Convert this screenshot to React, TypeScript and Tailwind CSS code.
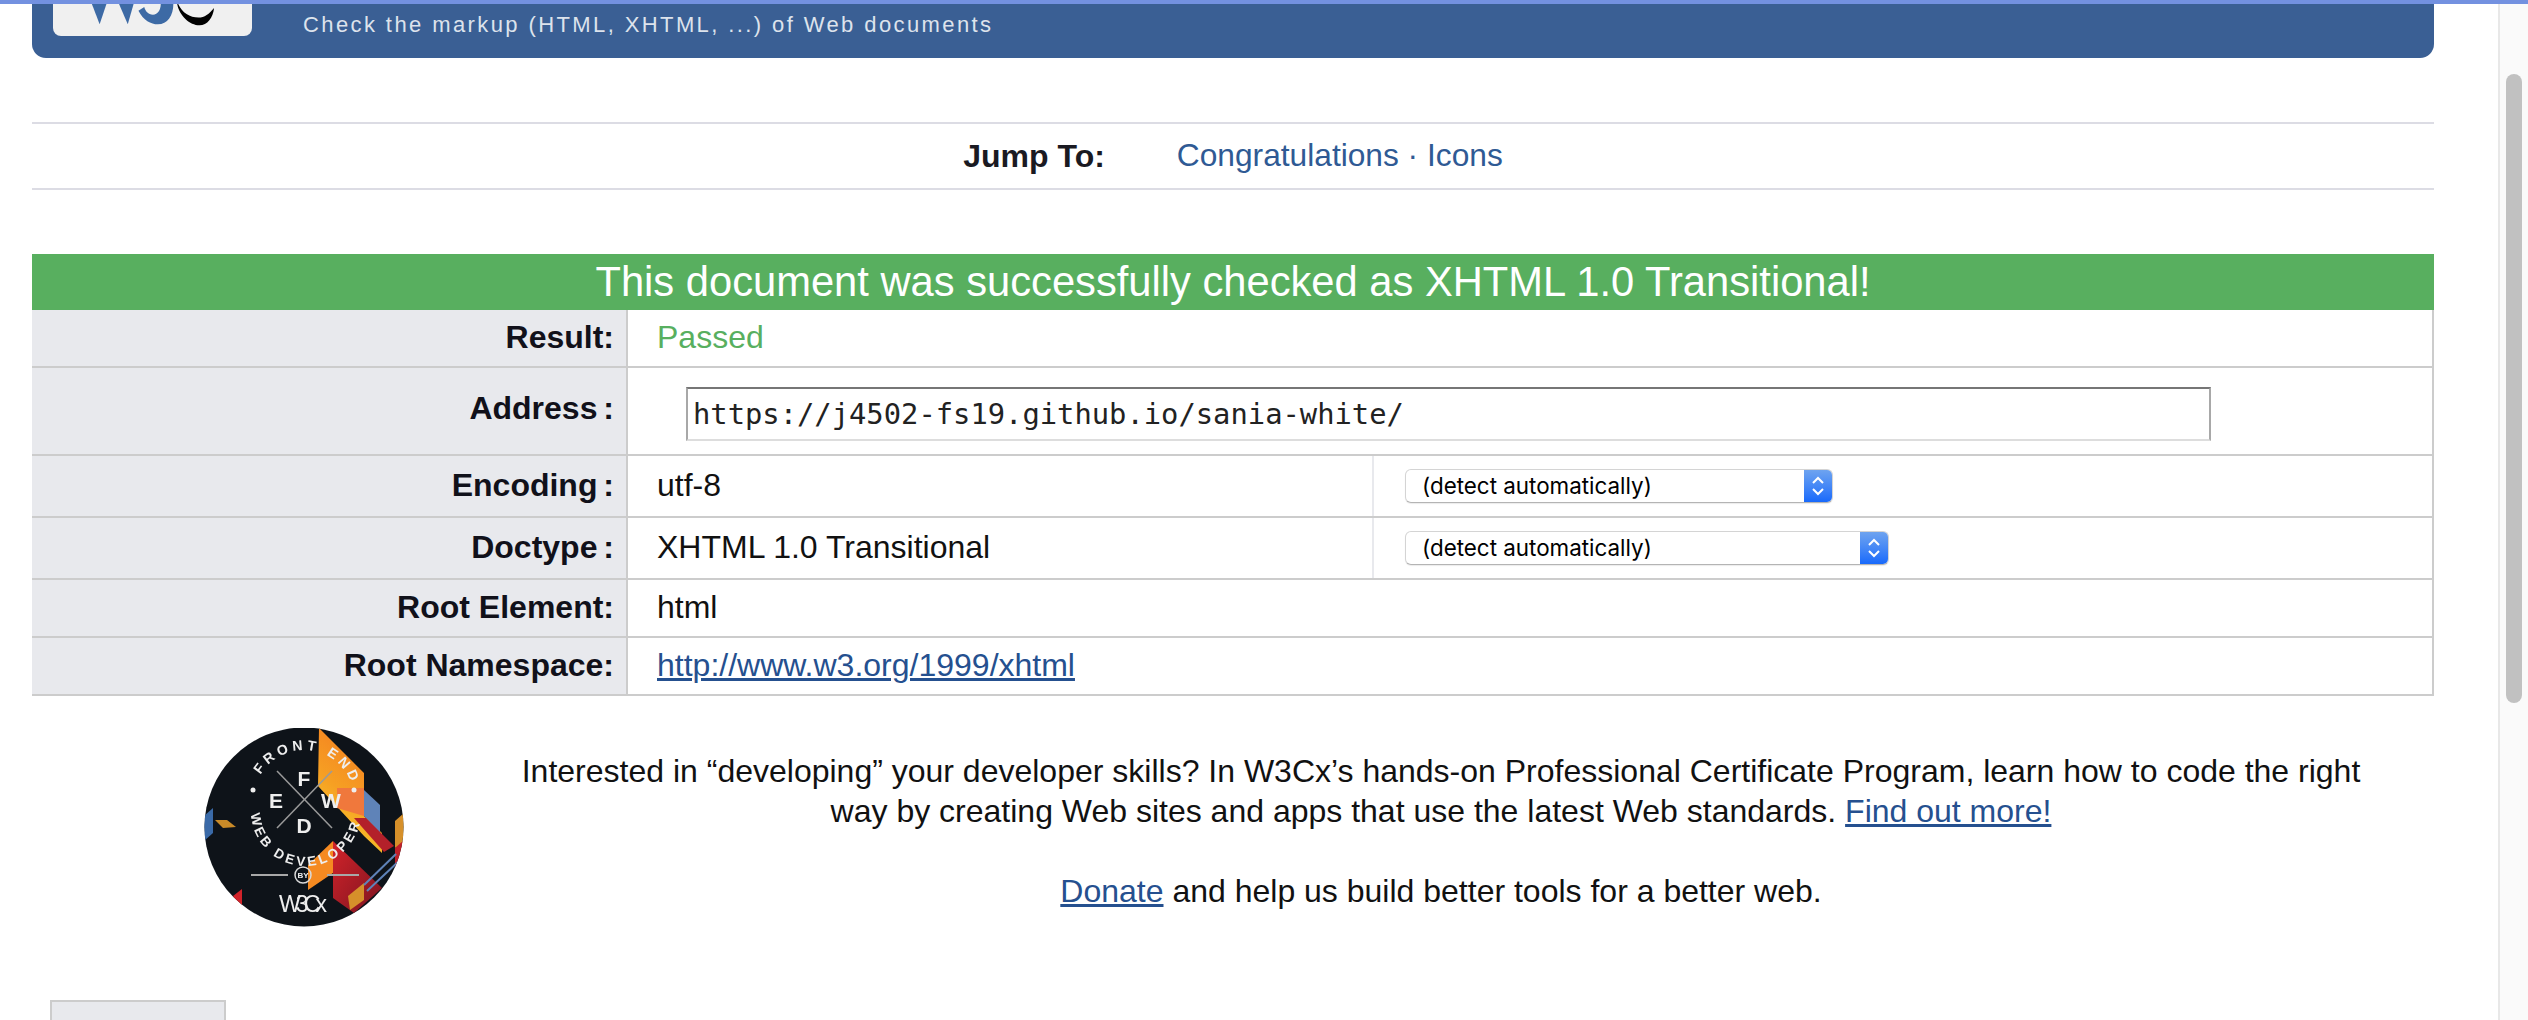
import React from "react";

const sans = "font-['Liberation_Sans',Arial,sans-serif]";

function W3CLogo() {
  return (
    <svg viewBox="0 0 199 33" className="w-full h-full block">
      <polygon points="37,0 52,0 45,21" fill="#3d6aa5" />
      <polygon points="65,0 80,0 74,21" fill="#3d6aa5" />
      <path d="M85,7 C90,17 98,21 105,21 C115,21 121,12 121,0 L108,0 C108,6 105,11 100,11 C95,11 92,7 91,3 Z" fill="#3d6aa5" />
      <path d="M125,0 C127,12 138,22 148,22 C156,22 162,14 163,4 C158,10 153,14 147,14 C138,14 130,9 126,0 Z" fill="#000" />
    </svg>
  );
}

function Badge() {
  return (
    <svg viewBox="0 0 200 200" className="w-[200px] h-[200px] shrink-0 blur-[0.6px]">
      <defs>
        <clipPath id="c"><circle cx="100" cy="99" r="99.5" /></clipPath>
        <linearGradient id="o" x1="0.7" y1="0" x2="0.3" y2="1">
          <stop offset="0" stopColor="#f47a20" />
          <stop offset="0.55" stopColor="#f6a023" />
          <stop offset="1" stopColor="#f7d02c" />
        </linearGradient>
        <linearGradient id="r" x1="0" y1="0" x2="1" y2="1">
          <stop offset="0" stopColor="#d2232a" />
          <stop offset="1" stopColor="#7c1420" />
        </linearGradient>
        <path id="up" d="M56.7,47 A50,50 0 0 1 150,72" />
        <path id="low" d="M47,86 A55,55 0 0 0 157,80" />
      </defs>
      <g clipPath="url(#c)">
        <rect width="200" height="200" fill="#0e1319" />
        <polygon points="115,0 160,45 160,88 178,105 178,125 160,108 114,58" fill="url(#o)" />
        <polygon points="160,62 176,77 176,105 160,88" fill="#5f83b8" />
        <polygon points="133,60 160,60 160,88 133,80" fill="#f0783c" />
        <polygon points="150,90 162,90 190,118 180,124" fill="#b3202a" />
        <polygon points="129,113 178,160 150,185 129,170" fill="url(#r)" />
        <polygon points="104,137 129,113 129,145 104,162" fill="#f58a21" />
        <polygon points="0,88 9,80 9,105 0,113" fill="#3a6aa8" />
        <polygon points="11,92 23,92 32,99 19,100" fill="#c98a28" />
        <polygon points="29,168 38,161 38,182" fill="#d2232a" />
        <polygon points="144,168 160,155 160,172 146,182" fill="#d6902a" />
        <polygon points="191,93 200,85 200,115 191,120" fill="#d6902a" />
        <polygon points="191,120 200,112 200,135 191,140" fill="#c1202a" />
        <line x1="160" y1="157" x2="192" y2="126" stroke="#5f83b8" strokeWidth="2" />
        <line x1="163" y1="163" x2="195" y2="133" stroke="#5f83b8" strokeWidth="2" />
        <line x1="73" y1="43" x2="128" y2="100" stroke="#9a9a9a" strokeWidth="1.5" />
        <line x1="128" y1="43" x2="73" y2="100" stroke="#9a9a9a" strokeWidth="1.5" />
        <line x1="47" y1="147" x2="84" y2="147" stroke="#a8a8a8" strokeWidth="2" />
        <line x1="123" y1="147" x2="155" y2="147" stroke="#a8a8a8" strokeWidth="2" />
        <circle cx="99" cy="147" r="8" fill="none" stroke="#d8d8d8" strokeWidth="1.5" />
        <g fill="#eeeeee" fontFamily="'Liberation Sans', Arial, sans-serif" textAnchor="middle">
          <text x="99" y="150" fontSize="8" fontWeight="700">BY</text>
          <text x="100" y="58" fontSize="21" fontWeight="700">F</text>
          <text x="72" y="80" fontSize="21" fontWeight="700">E</text>
          <text x="127" y="80" fontSize="21" fontWeight="700">W</text>
          <text x="100" y="105" fontSize="21" fontWeight="700">D</text>
          <text x="99" y="184" fontSize="23" fontWeight="400" textLength="48">W3Cx</text>
          <text fontSize="14" fontWeight="700" letterSpacing="3.8" textAnchor="start">
            <textPath href="#up" startOffset="0">FRONT END</textPath>
          </text>
          <text fontSize="13.5" fontWeight="700" letterSpacing="3.2" textAnchor="start">
            <textPath href="#low" startOffset="0">WEB DEVELOPER</textPath>
          </text>
          <circle cx="49" cy="62" r="2.5" />
          <circle cx="150" cy="62" r="2.5" />
        </g>
      </g>
    </svg>
  );
}

function FakeSelect({ width }: { width: string }) {
  return (
    <div className={`${width} h-[34px] flex rounded-[6px] border border-[#d4d4d4] border-b-[#b4b4b4] bg-white shadow-[0_1px_1px_rgba(0,0,0,0.08)] overflow-hidden`}>
      <span className="flex-1 pl-[16px] font-['Inter',sans-serif] text-[22.4px] leading-[32px] text-black whitespace-nowrap">
        (detect automatically)
      </span>
      <span className="w-[28px] bg-gradient-to-b from-[#6ea3ef] to-[#1769fb] flex items-center justify-center">
        <svg viewBox="0 0 14 22" className="w-[14px] h-[22px]" fill="none" stroke="#fff" strokeWidth="2">
          <path d="M2,8 L7,3 L12,8" />
          <path d="M2,14 L7,19 L12,14" />
        </svg>
      </span>
    </div>
  );
}

function Row({ label, h, children, labelPad = "pb-[2px]" }: { label: string; h: string; children: React.ReactNode; labelPad?: string }) {
  return (
    <div className={`flex ${h}`}>
      <div className={`w-[596px] shrink-0 flex items-center justify-end pr-[12px] ${labelPad} bg-[#e8e9ed] border-b-2 border-b-[#cccccc] border-r-2 border-r-[#cccccc] font-bold text-[#11111a] whitespace-pre`}>
        {label}
      </div>
      <div className="flex-1 flex items-center border-b-2 border-b-[#cccccc] border-r-2 border-r-[#cccccc] min-w-0">
        {children}
      </div>
    </div>
  );
}

export default function App() {
  return (
    <div className={`${sans} h-[1020px] overflow-hidden bg-white text-[32px] text-[#111]`}>
      <div className="h-[4px] bg-[#7391e0]" />
      <div className="flex h-[1016px]">
        <main className="flex-1 min-w-0 pl-[32px] pr-[64px]">
          <header className="h-[54px] bg-[#3a5f94] rounded-b-[14px] flex items-start">
            <div className="ml-[21px] w-[199px] h-[32px] bg-[#f0f0f0] rounded-b-[8px] overflow-hidden">
              <W3CLogo />
            </div>
            <p className="ml-[51px] mt-[8px] text-[22px] leading-[26px] tracking-[2.4px] text-[#dde3ec] whitespace-nowrap">
              Check the markup (HTML, XHTML, ...) of Web documents
            </p>
          </header>

          <nav className="mt-[64px] h-[68px] border-y-2 border-[#dcdce4] flex items-center justify-center">
            <span className="font-bold text-[#1a1a22]">Jump To:</span>
            <span className="ml-[72px] text-[31.7px] text-[#2f5a94]">
              <a>Congratulations</a> · <a>Icons</a>
            </span>
          </nav>

          <section className="mt-[64px]">
            <h2 className="h-[56px] bg-[#58af5f] text-white text-center text-[41.7px] leading-[56px] font-normal">
              This document was successfully checked as XHTML 1.0 Transitional!
            </h2>
            <Row label="Result:" h="h-[58px]">
              <span className="pl-[29px] pb-[2px] text-[#58af5f]">Passed</span>
            </Row>
            <Row label="Address :" h="h-[88px]" labelPad="pb-[6px] [word-spacing:-3px]">
              <input
                readOnly
                value="https://j4502-fs19.github.io/sania-white/"
                className="ml-[58px] mt-[6px] w-[1525px] h-[54px] pl-[5px] border-2 border-t-[#767676] border-l-[#a8a8a8] border-r-[#a8a8a8] border-b-[#dddddd] font-['DejaVu_Sans_Mono',monospace] text-[28.8px] text-[#222] outline-none"
              />
            </Row>
            <Row label="Encoding :" h="h-[62px]" labelPad="pb-[2px] [word-spacing:-3px]">
              <span className="pl-[29px] pb-[2px] w-[746px] shrink-0 self-stretch flex items-center border-r-2 border-[#e8e9ed]">utf-8</span>
              <span className="ml-[31px]"><FakeSelect width="w-[428px]" /></span>
            </Row>
            <Row label="Doctype :" h="h-[62px]" labelPad="pb-[2px] [word-spacing:-3px]">
              <span className="pl-[29px] pb-[2px] w-[746px] shrink-0 self-stretch flex items-center border-r-2 border-[#e8e9ed]">XHTML 1.0 Transitional</span>
              <span className="ml-[31px]"><FakeSelect width="w-[484px]" /></span>
            </Row>
            <Row label="Root Element:" h="h-[58px]">
              <span className="pl-[29px] pb-[2px]">html</span>
            </Row>
            <Row label="Root Namespace:" h="h-[58px]">
              <a className="ml-[29px] mb-[2px] text-[#25508f] underline">http://www.w3.org/1999/xhtml</a>
            </Row>
          </section>

          <section className="mt-[32px] h-[199px] pl-[172px] flex items-start">
            <Badge />
            <div className="ml-[97px] w-[1880px] mt-[23px] text-center leading-[40px] text-[#111]">
              <p>
                Interested in “developing” your developer skills? In W3Cx’s hands-on Professional Certificate Program, learn how to code the right way by creating Web sites and apps that use the latest Web standards.{" "}
                <a className="text-[#25508f] underline">Find out more!</a>
              </p>
              <p className="mt-[40px]">
                <a className="text-[#25508f] underline">Donate</a> and help us build better tools for a better web.
              </p>
            </div>
          </section>

          <div className="mt-[73px] ml-[18px] w-[176px] h-[40px] bg-[#e8e9ed] border-2 border-[#cccccc]" />
        </main>

        <aside className="w-[30px] shrink-0 bg-[#fafafa] border-l-2 border-[#e8e8e8] pl-[6px] pt-[70px]">
          <div className="w-[16px] h-[629px] rounded-full bg-[#c1c1c1]" />
        </aside>
      </div>
    </div>
  );
}
